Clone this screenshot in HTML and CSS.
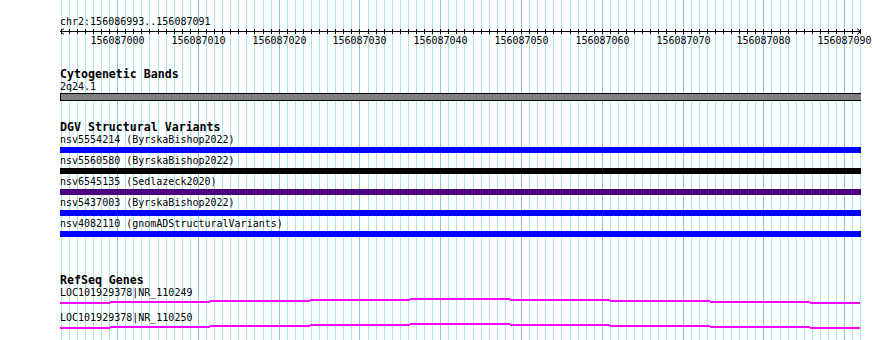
FILE: index.html
```html
<!DOCTYPE html>
<html lang="en">
<head>
    <meta charset="UTF-8">
    <title>Track View - chr2:156086993..156087091</title>
    <link rel="stylesheet" href="styles.css">
</head>
<body>

    <div class="view">
        <!-- base grid, drawn behind the tracks -->
        <svg id="grid" class="grid" width="890" height="340"></svg>

        <div class="tracks">
            <div class="locus">chr2:156086993..156087091</div>
            <svg id="ruler" class="ruler" width="810" height="20"></svg>

            <!-- Cytogenetic bands -->
            <div class="track track-cyto">
                <div class="track-title">Cytogenetic Bands</div>
                <div class="feature-label">2q24.1</div>
                <div class="band"></div>
            </div>

            <!-- DGV -->
            <div class="track track-dgv">
                <div class="track-title">DGV Structural Variants</div>
                <div class="feature">
                    <div class="feature-label">nsv5554214 (ByrskaBishop2022)</div>
                    <div class="bar bar-blue"></div>
                </div>
                <div class="feature">
                    <div class="feature-label">nsv5560580 (ByrskaBishop2022)</div>
                    <div class="bar bar-black"></div>
                </div>
                <div class="feature">
                    <div class="feature-label">nsv6545135 (Sedlazeck2020)</div>
                    <div class="bar bar-purple"></div>
                </div>
                <div class="feature">
                    <div class="feature-label">nsv5437003 (ByrskaBishop2022)</div>
                    <div class="bar bar-blue"></div>
                </div>
                <div class="feature">
                    <div class="feature-label">nsv4082110 (gnomADStructuralVariants)</div>
                    <div class="bar bar-blue"></div>
                </div>
            </div>

            <!-- RefSeq genes -->
            <div class="track track-genes">
                <div class="track-title">RefSeq Genes</div>
                <div class="gene">
                    <div class="gene-label">LOC101929378|NR_110249</div>
                    <svg class="gene-line" width="801" height="15"></svg>
                </div>
                <div class="gene">
                    <div class="gene-label">LOC101929378|NR_110250</div>
                    <svg class="gene-line" width="801" height="15"></svg>
                </div>
            </div>
        </div>
    </div>

    <script>
        const NS = 'http://www.w3.org/2000/svg';
        const START = 156086993;
        const BASES = 99;
        const col = k => Math.round(60.6 + 8.0778 * k);

        const make = (tag, attrs) => {
            const el = document.createElementNS(NS, tag);
            for (const key in attrs) el.setAttribute(key, attrs[key]);
            return el;
        };

        // Grid lines, one per base, darker every 10
        const grid = document.getElementById('grid');
        for (let k = 0; k <= BASES; k++) {
            const major = (START + k) % 10 === 0;
            grid.appendChild(make('rect', {
                x: col(k), y: 0, width: 1, height: 340,
                class: major ? 'grid-major' : 'grid-minor'
            }));
        }

        // Ruler: axis, ticks, arrows, labels (x is relative to 60)
        const ruler = document.getElementById('ruler');
        ruler.appendChild(make('rect', { x: 0, y: 3, width: 801, height: 1, class: 'ink' }));
        for (let k = 0; k <= BASES; k++) {
            ruler.appendChild(make('rect', { x: col(k) - 60, y: 1, width: 1, height: 5, class: 'ink' }));
            if ((START + k) % 10 === 0) {
                const label = make('text', { x: col(k) - 59.5, y: 16, class: 'ruler-label' });
                label.textContent = START + k;
                ruler.appendChild(label);
            }
        }
        ruler.appendChild(make('polyline', { points: '4,0.5 0.5,3.5 4,6.5', class: 'arrow' }));
        ruler.appendChild(make('polyline', { points: '797,0.5 800.5,3.5 797,6.5', class: 'arrow' }));

        // Gene intron lines, stepped one pixel every 100px
        const steps = [[0, 50, 4], [50, 150, 3], [150, 250, 2], [250, 350, 1], [350, 450, 0],
                       [450, 550, 1], [550, 650, 2], [650, 750, 3], [750, 800, 4]];
        document.querySelectorAll('.gene-line').forEach(svg => {
            steps.forEach(([from, to, y]) => {
                svg.appendChild(make('rect', { x: from, y: y, width: to - from, height: 2, class: 'intron' }));
            });
        });
    </script>

</body>
</html>
```

FILE: styles.css
```css
body {
    margin: 0;
    background-color: #fff;
    font-family: 'DejaVu Sans Mono', monospace;
    color: #000;
}

.view {
    position: relative;
    width: 890px;
    height: 340px;
    overflow: hidden;
}

.grid {
    position: absolute;
    top: 0;
    left: 0;
}

.grid-minor {
    fill: #a6e6ec;
}

.grid-major {
    fill: #84c4e6;
}

.tracks {
    position: relative;
    padding: 16px 0 0 60px;
}

.locus {
    font-size: 10px;
    line-height: 12px;
    height: 12px;
}

.ruler {
    display: block;
    overflow: visible;
}

.ink {
    fill: #000;
}

.arrow {
    fill: none;
    stroke: #000;
    stroke-width: 1;
}

.ruler-label {
    font-family: 'DejaVu Sans Mono', monospace;
    font-size: 10px;
    text-anchor: middle;
    fill: #000;
}

.track-title {
    font-size: 11.6px;
    font-weight: bold;
    line-height: 11px;
    height: 11px;
}

.track-cyto {
    margin-top: 21px;
}

.track-dgv {
    margin-top: 21px;
}

.track-genes {
    margin-top: 37px;
}

.track-genes .track-title {
    margin-bottom: 2px;
}

.feature-label {
    font-size: 10px;
    line-height: 13px;
    height: 13px;
    white-space: nowrap;
}

.band {
    width: 800px;
    height: 6px;
    background-color: #808080;
    border: 1px solid #000;
    border-right: none;
}

.feature {
    height: 21px;
}

.bar {
    width: 801px;
    height: 6px;
    margin-top: 1px;
}

.bar-blue {
    background-color: #0000ff;
}

.bar-black {
    background-color: #000;
}

.bar-purple {
    background-color: #4b0082;
}

.gene-label {
    font-size: 10px;
    line-height: 10px;
    height: 10px;
    white-space: nowrap;
}

.gene-line {
    display: block;
}

.intron {
    fill: #ff00ff;
}
```
